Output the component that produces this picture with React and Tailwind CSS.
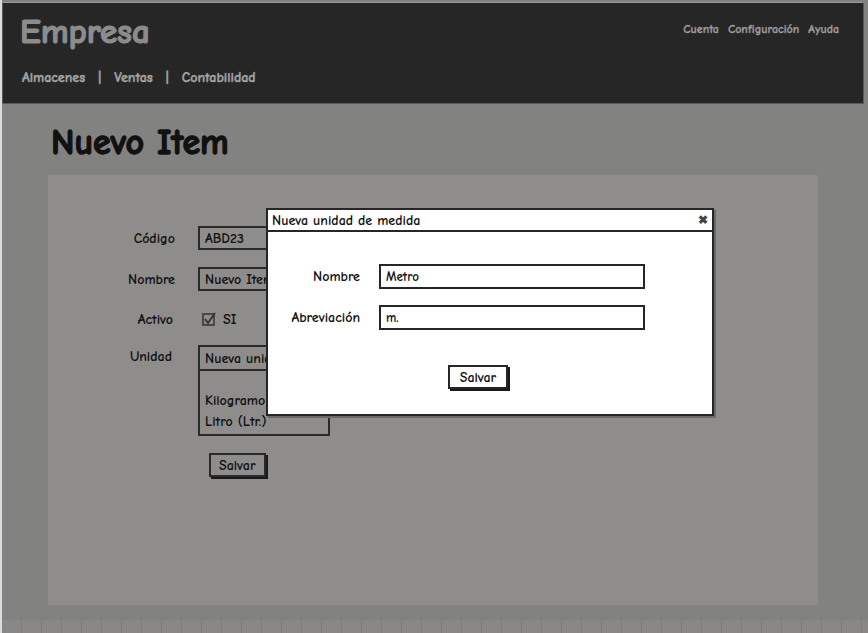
import React from "react";

const font = { fontFamily: '"Comic Sans MS", "Comic Neue", "Noto Sans", sans-serif' };

function Field({ children, className = "" }) {
  return (
    <div className={"h-[24px] border-2 border-[#2a2a2a] flex items-center px-[5px] text-[14px] font-bold text-[#111] overflow-hidden whitespace-nowrap " + className}>
      {children}
    </div>
  );
}

export default function App() {
  const tiles = Array.from({ length: 44 });
  return (
    <div className="w-[868px] h-[633px] bg-[#828280] relative overflow-hidden border-l-2 border-[#dcdcdc]" style={font}>
      {/* header */}
      <div className="mt-[2px] w-[862px] h-[102px] bg-[#262626] border border-[#5a5a5a] border-t-[#9a9a9a] flex justify-between">
        <div className="flex flex-col pl-[17px]">
          <div className="text-[35px] font-bold text-[#8c8c8c] leading-[40px] mt-[9px] [-webkit-text-stroke:1.2px_#8c8c8c]">Empresa</div>
          <div className="flex items-center gap-[13px] text-[14px] font-bold text-[#a3a3a3] mt-[15px] pl-[2px] [-webkit-text-stroke:0.4px_#a3a3a3]">
            <span>Almacenes</span>
            <span>|</span>
            <span>Ventas</span>
            <span>|</span>
            <span>Contabilidad</span>
          </div>
        </div>
        <div className="flex gap-[9px] text-[12px] font-bold text-[#9c9c9c] pt-[17px] pr-[24px] [-webkit-text-stroke:0.3px_#9c9c9c]">
          <span>Cuenta</span>
          <span>Configuración</span>
          <span>Ayuda</span>
        </div>
      </div>

      {/* title */}
      <div className="pl-[49px] pt-[18px] text-[36px] font-bold text-[#111] leading-[42px] h-[71px] [-webkit-text-stroke:1.3px_#111]">Nuevo Item</div>

      {/* panel */}
      <div className="ml-[46px] w-[770px] h-[430px] bg-[#8e8d8b] pt-[51px]">
        <div className="grid grid-cols-[127px_132px] gap-x-[23px] items-center text-[14px] font-bold text-[#111]">
          <div className="text-right">Código</div>
          <Field>ABD23</Field>

          <div className="h-[17px] col-span-2" />

          <div className="text-right">Nombre</div>
          <Field>Nuevo Item</Field>

          <div className="h-[16px] col-span-2" />

          <div className="text-right pr-[2px]">Activo</div>
          <div className="flex items-center gap-[7px] pl-[4px] h-[24px]">
            <svg width="14" height="14" viewBox="0 0 14 14">
              <rect x="1" y="2" width="11" height="11" fill="none" stroke="#333" strokeWidth="1.5" />
              <path d="M3 7 L6 11 L13 1" fill="none" stroke="#333" strokeWidth="1.8" />
            </svg>
            <span>SI</span>
          </div>

          <div className="h-[14px] col-span-2" />

          <div className="text-right self-start pt-[1px] pr-[3px]">Unidad</div>
          <div className="flex flex-col">
            <Field className="border-b-0">Nueva unidad</Field>
            <div className="h-[67px] border-2 border-[#2a2a2a] px-[5px] pt-[19px] leading-[21px] text-[14px]">
              <div>Kilogramo</div>
              <div>Litro (Ltr.)</div>
            </div>
          </div>

          <div className="h-[17px] col-span-2" />

          <div />
          <div className="pl-[11px]">
            <button className="h-[24px] px-[8px] border-2 border-[#2a2a2a] shadow-[2px_2px_0_#1a1a1a] text-[14px] font-bold text-[#111]">Salvar</button>
          </div>
        </div>
      </div>

      {/* bottom tiles */}
      <div className="absolute left-0 bottom-0 w-[868px] h-[13px] flex bg-[#888785]">
        {tiles.map((_, i) => (
          <div key={i} className="w-[20px] h-full border-r border-[#7d7c7a] shrink-0" />
        ))}
      </div>

      {/* dialog */}
      <div className="absolute left-[264px] top-[208px] w-[448px] h-[208px] bg-white border-2 border-[#262626] shadow-[2px_2px_0_#6a6a6a] flex flex-col">
        <div className="h-[22px] border-b-2 border-[#262626] flex items-center justify-between px-[4px] text-[14px] font-bold text-[#111]">
          <span>Nueva unidad de medida</span>
          <span className="text-[12px] text-[#444] leading-none">✖</span>
        </div>
        <div className="grid grid-cols-[92px_266px] gap-x-[19px] items-center pt-[32px] text-[14px] font-bold text-[#111]">
          <div className="text-right">Nombre</div>
          <div className="h-[25px] border-2 border-[#262626] flex items-center px-[5px] text-[13px]">Metro</div>
          <div className="h-[16px] col-span-2" />
          <div className="text-right">Abreviación</div>
          <div className="h-[25px] border-2 border-[#262626] flex items-center px-[5px] text-[13px]">m.</div>
        </div>
        <div className="flex justify-center pt-[35px] pr-[24px]">
          <button className="h-[24px] px-[10px] border-2 border-[#262626] bg-white shadow-[2px_2px_0_#1a1a1a] text-[14px] font-bold text-[#111]">Salvar</button>
        </div>
      </div>
    </div>
  );
}
